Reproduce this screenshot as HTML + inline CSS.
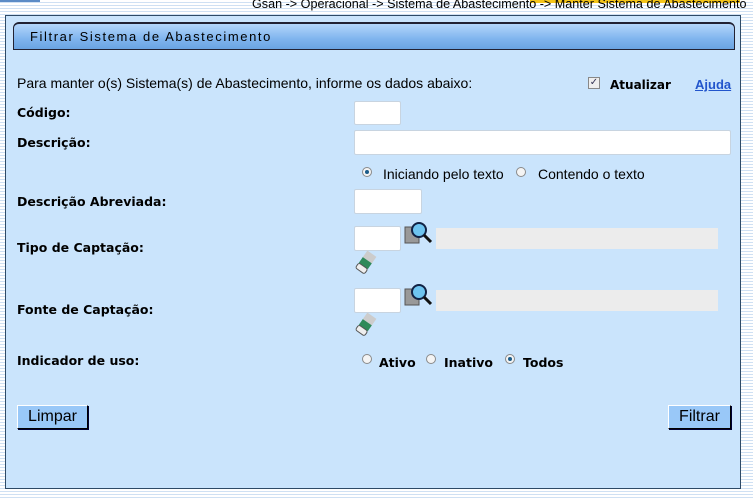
<!DOCTYPE html>
<html><head><meta charset="utf-8"><style>
body{margin:0;width:753px;height:499px;overflow:hidden;position:relative;font-family:"Liberation Sans",Arial,sans-serif;
background:repeating-linear-gradient(180deg,#ffffff 0,#ffffff 2px,#cfe0f3 2px,#cfe0f3 3px);}
.a{position:absolute;white-space:nowrap}
.lb{font-family:"DejaVu Sans",sans-serif;font-weight:bold;font-size:12.5px;color:#000}
.in{position:absolute;background:#fff;border:1px solid #c8d4e0;border-radius:2px;box-sizing:border-box}
.dis{position:absolute;background:#ececec}
.btn{position:absolute;background:#99c8f8;border:1px solid #000;border-top-color:#fff;border-left-color:#fff;box-shadow:1px 1px 0 #003;font-size:16px;text-align:center;box-sizing:border-box;line-height:22px}
.rad{position:absolute;width:10px;height:10px;border-radius:50%;border:1px solid #8a8a8a;background:#f4f4f4;box-sizing:border-box}
.rad.on::after{content:"";position:absolute;left:2px;top:2px;width:4px;height:4px;border-radius:50%;background:#1a5c8a}
</style></head><body>
<div class="a" style="left:0;top:0;width:40px;height:2px;background:#5b8bc6"></div>
<div class="a" style="left:530px;top:0;width:210px;height:3px;background:#f5c51a"></div>
<div class="a" style="left:252px;top:-3px;font-size:12.6px;color:#000">Gsan -&gt; Operacional -&gt; Sistema de Abastecimento -&gt; Manter Sistema de Abastecimento</div>
<div class="a" style="left:5px;top:15px;width:736px;height:474px;background:#cae4fc;border:1px solid #2e4a66;box-sizing:border-box"></div>
<div class="a" style="left:13px;top:22px;width:722px;height:28px;background:linear-gradient(#b4d6fa,#7fb4ee 60%,#6aa4e2);border:1px solid #223;border-top:2px solid #223;border-radius:6px 6px 0 0;box-sizing:border-box"></div>
<div class="a" style="left:30px;top:29px;font-size:13px;letter-spacing:1.6px;color:#000">Filtrar Sistema de Abastecimento</div>
<div class="a" style="left:17px;top:75px;font-size:14px;color:#000">Para manter o(s) Sistema(s) de Abastecimento, informe os dados abaixo:</div>
<div class="a" style="left:588px;top:77px;width:12px;height:12px;border:1px solid #888;background:#eee;box-sizing:border-box;font-size:10px;line-height:10px;text-align:center;color:#335">✓</div>
<div class="a lb" style="left:610px;top:78px;font-size:12px">Atualizar</div>
<div class="a" style="left:695px;top:77px;font-size:13px;font-weight:bold;color:#2255cc;text-decoration:underline">Ajuda</div>

<div class="a lb" style="left:17px;top:105px">Código:</div>
<div class="in" style="left:354px;top:101px;width:47px;height:24px"></div>
<div class="a lb" style="left:17px;top:135px">Descrição:</div>
<div class="in" style="left:354px;top:130px;width:377px;height:25px"></div>
<div class="rad on" style="left:362px;top:167px"></div>
<div class="a" style="left:383px;top:166px;font-size:14px">Iniciando pelo texto</div>
<div class="rad" style="left:516px;top:167px"></div>
<div class="a" style="left:538px;top:166px;font-size:14px">Contendo o texto</div>
<div class="a lb" style="left:17px;top:194px">Descrição Abreviada:</div>
<div class="in" style="left:354px;top:189px;width:68px;height:25px"></div>

<div class="a lb" style="left:17px;top:240px">Tipo de Captação:</div>
<div class="in" style="left:354px;top:226px;width:47px;height:25px"></div>
<div class="dis" style="left:436px;top:228px;width:282px;height:21px"></div>
<div class="a lb" style="left:17px;top:302px">Fonte de Captação:</div>
<div class="in" style="left:354px;top:288px;width:47px;height:25px"></div>
<div class="dis" style="left:436px;top:290px;width:282px;height:21px"></div>

<svg class="a" style="left:404px;top:220px" width="30" height="26"><rect x="1" y="7" width="14" height="16" fill="#999" stroke="#555"/><circle cx="15" cy="10" r="7" fill="#6ec4f0" stroke="#124" stroke-width="2"/><line x1="20" y1="15" x2="27" y2="22" stroke="#111" stroke-width="3"/></svg>
<svg class="a" style="left:404px;top:282px" width="30" height="26"><rect x="1" y="7" width="14" height="16" fill="#999" stroke="#555"/><circle cx="15" cy="10" r="7" fill="#6ec4f0" stroke="#124" stroke-width="2"/><line x1="20" y1="15" x2="27" y2="22" stroke="#111" stroke-width="3"/></svg>
<svg class="a" style="left:355px;top:251px" width="22" height="24"><g transform="rotate(35 11 12)"><rect x="5" y="1" width="11" height="9" fill="#ccc"/><rect x="5" y="9" width="11" height="7" fill="#2e8a5a"/><rect x="5" y="16" width="11" height="6" rx="2" fill="#eee" stroke="#555"/></g></svg>
<svg class="a" style="left:355px;top:313px" width="22" height="24"><g transform="rotate(35 11 12)"><rect x="5" y="1" width="11" height="9" fill="#ccc"/><rect x="5" y="9" width="11" height="7" fill="#2e8a5a"/><rect x="5" y="16" width="11" height="6" rx="2" fill="#eee" stroke="#555"/></g></svg>

<div class="a lb" style="left:17px;top:353px">Indicador de uso:</div>
<div class="rad" style="left:362px;top:354px"></div>
<div class="a lb" style="left:379px;top:355px">Ativo</div>
<div class="rad" style="left:426px;top:354px"></div>
<div class="a lb" style="left:444px;top:355px">Inativo</div>
<div class="rad on" style="left:505px;top:354px"></div>
<div class="a lb" style="left:523px;top:355px">Todos</div>

<div class="btn" style="left:17px;top:405px;width:71px;height:24px">Limpar</div>
<div class="btn" style="left:668px;top:405px;width:63px;height:24px">Filtrar</div>
</body></html>
